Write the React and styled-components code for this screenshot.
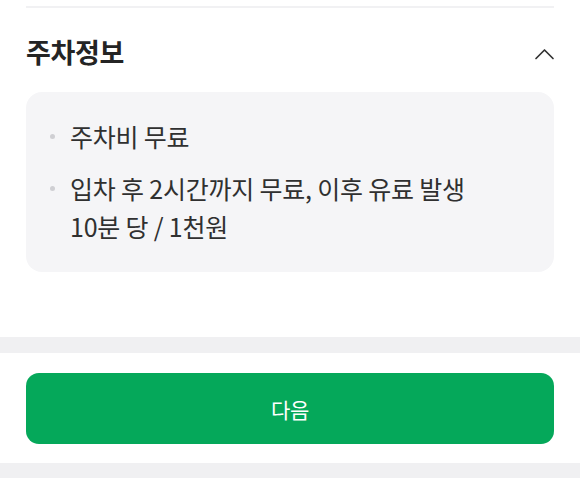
import React from "react";
import styled, { createGlobalStyle } from "styled-components";

const GlobalStyle = createGlobalStyle`
  body {
    margin: 0;
    background: #ffffff;
    font-family: "Noto Sans CJK KR", "Noto Sans", sans-serif;
  }
`;

const Page = styled.div`
  width: 580px;
`;
const Section = styled.section`
  padding: 6px 26px 65px;
  background: #ffffff;
`;
const Divider = styled.div`
  height: 2px;
  background: #f1f1f3;
`;
const Header = styled.div`
  display: flex;
  justify-content: space-between;
  align-items: center;
  margin-top: 26px;
  margin-bottom: 22px;
`;
const Title = styled.h3`
  margin: 0;
  font-size: 27px;
  line-height: 36px;
  font-weight: 700;
  color: #242424;
  letter-spacing: -0.3px;
`;
const Toggle = styled.button`
  display: flex;
  align-items: center;
  justify-content: center;
  padding: 0;
  border: 0;
  background: none;
  margin-right: -1px;
  margin-top: 3px;
`;
const Card = styled.ul`
  margin: 0;
  list-style: none;
  padding: 25px 24px 27px;
  background: #f5f5f7;
  border-radius: 16px;
  display: flex;
  flex-direction: column;
  gap: 14px;
`;
const Item = styled.li`
  display: flex;
  align-items: flex-start;
  font-size: 25px;
  line-height: 38px;
  color: #303030;
  letter-spacing: -0.2px;
`;
const Dot = styled.span`
  flex: none;
  width: 5px;
  height: 5px;
  border-radius: 50%;
  background: #cfcfd3;
  margin-top: 17px;
  margin-right: 15px;
`;
const Band = styled.div`
  height: 16px;
  background: #f0f0f2;
`;
const Footer = styled.div`
  padding: 20px 26px 19px;
`;
const NextButton = styled.button`
  width: 100%;
  height: 71px;
  border: 0;
  border-radius: 13px;
  background: #05a85a;
  color: #ffffff;
  font-family: inherit;
  font-size: 21px;
  letter-spacing: -0.2px;
`;

const items = [
  ["주차비 무료"],
  ["입차 후 2시간까지 무료, 이후 유료 발생", "10분 당 / 1천원"],
];

const App = () => (
  <Page>
    <GlobalStyle />
    <Section>
      <Divider />
      <Header>
        <Title>주차정보</Title>
        <Toggle aria-label="접기">
          <svg width="21" height="14" viewBox="0 0 21 14" fill="none">
            <path d="M2 11.5L10.5 3L19 11.5" stroke="#333" strokeWidth="1.7" strokeLinecap="round" strokeLinejoin="round" />
          </svg>
        </Toggle>
      </Header>
      <Card>
        {items.map((lines, index) => (
          <Item key={index}>
            <Dot />
            <div>
              {lines.map((line, i) => (
                <div key={i}>{line}</div>
              ))}
            </div>
          </Item>
        ))}
      </Card>
    </Section>
    <Band />
    <Footer>
      <NextButton>다음</NextButton>
    </Footer>
    <Band />
  </Page>
);

export default App;
